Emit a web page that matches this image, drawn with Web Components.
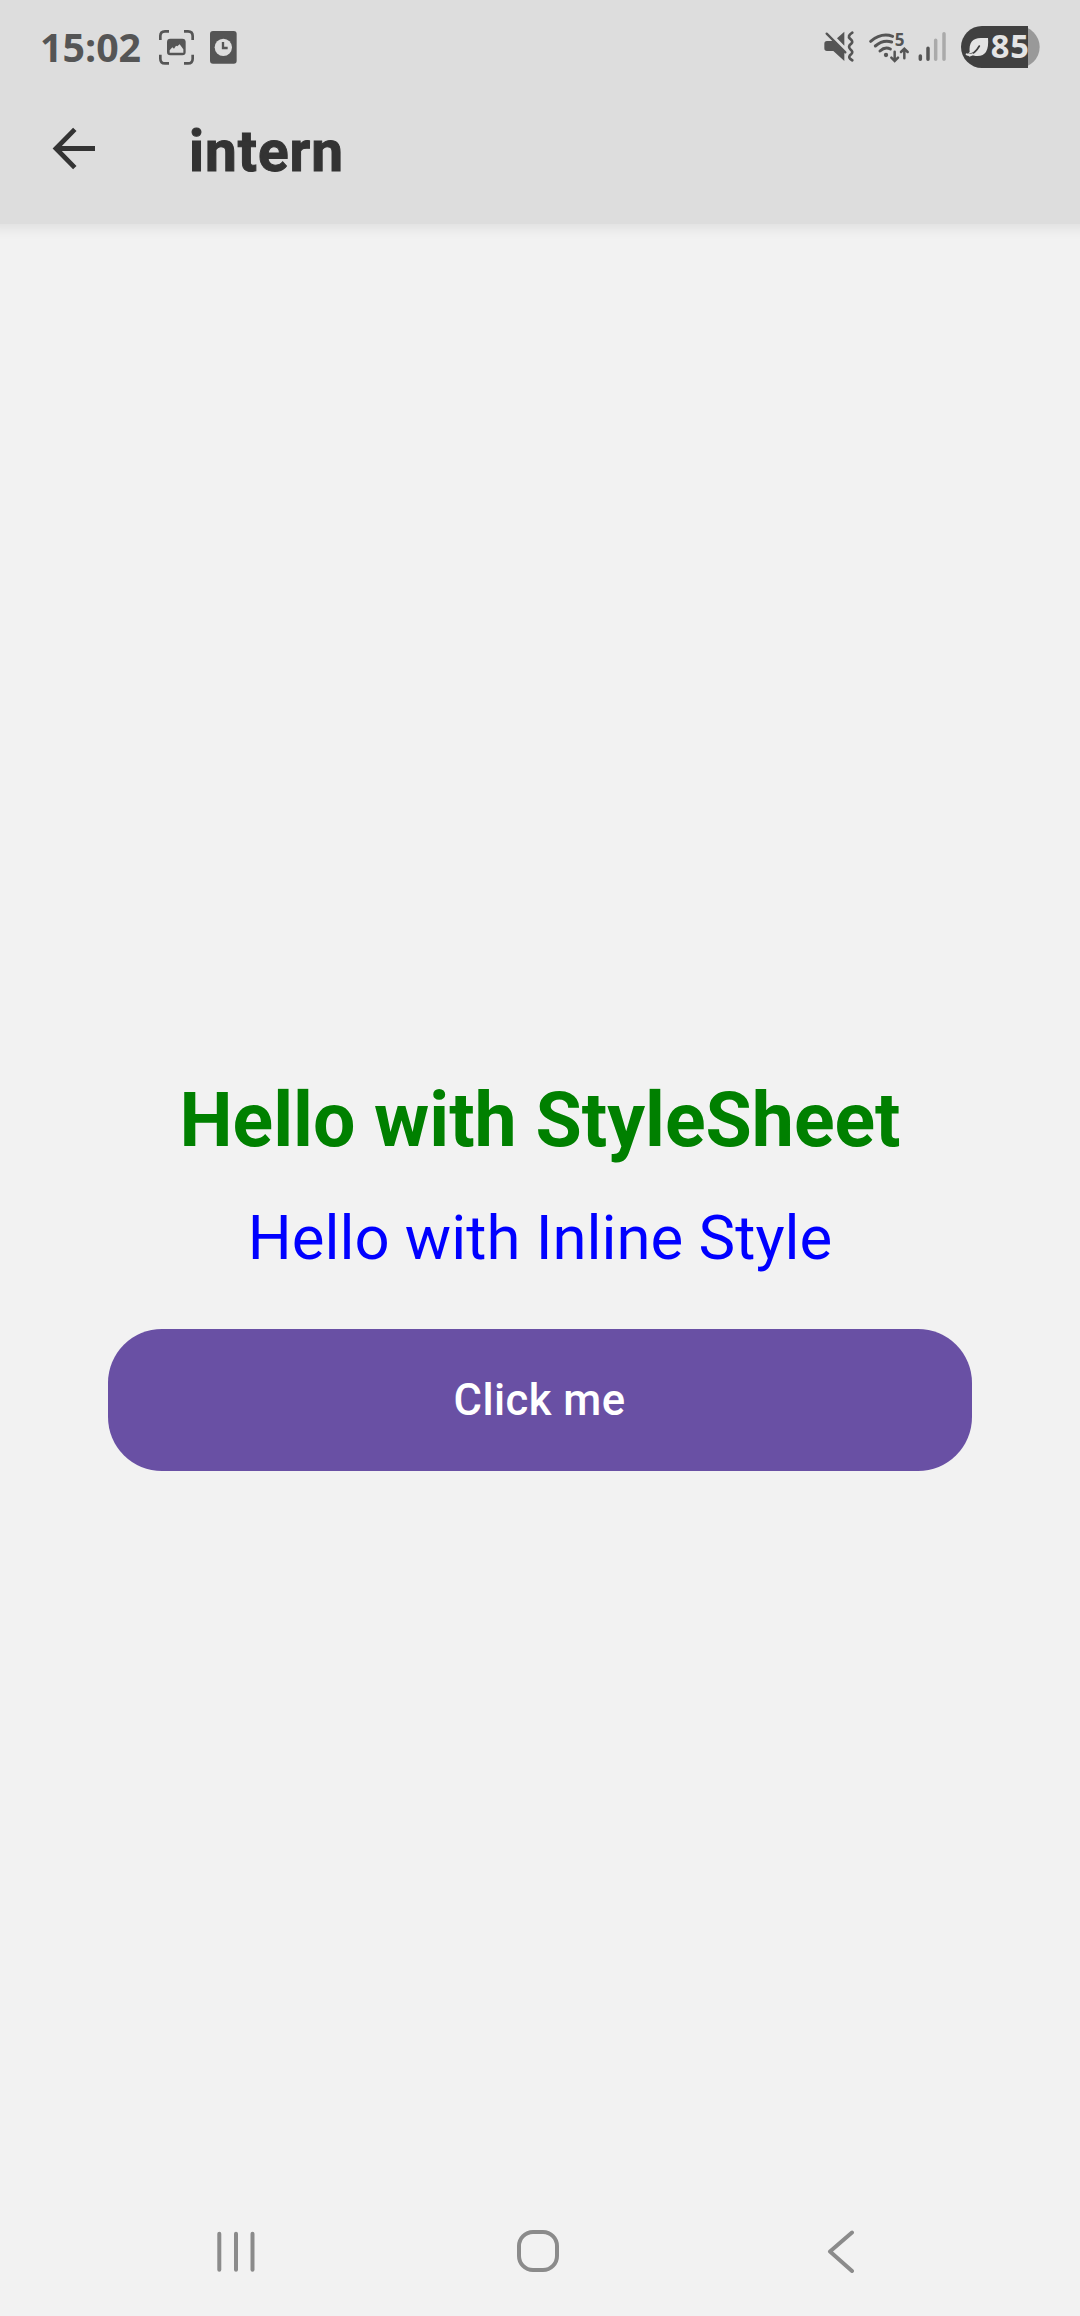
<!DOCTYPE html>
<html lang="en">
<head>
<meta charset="utf-8">
<title>intern</title>
<style>
html,body{margin:0;height:100%;background:#f2f2f2}
</style>
</head>
<body>
<app-screen>
  <status-bar slot="top" time="15:02" battery="85"></status-bar>
  <app-header slot="top">intern</app-header>
  <hello-text style="--size:75.2px;--weight:700;--color:#008000;--line:88px">Hello with StyleSheet</hello-text>
  <hello-text style="--size:61.7px;--weight:400;--color:#0000ff;--line:74px;--gap:37px">Hello with Inline Style</hello-text>
  <app-button>Click me</app-button>
  <nav-bar slot="bottom"></nav-bar>
</app-screen>
<script>
function define(name, html) {
  const template = document.createElement('template');
  template.innerHTML = html;
  customElements.define(name, class extends HTMLElement {
    constructor() {
      super();
      this.attachShadow({mode: 'open'}).append(template.content.cloneNode(true));
    }
    connectedCallback() {
      for (const el of this.shadowRoot.querySelectorAll('[data-attr]'))
        el.textContent = this.getAttribute(el.dataset.attr);
    }
  });
}

define('app-screen', `
<style>
:host{display:flex;flex-direction:column;height:2316px;width:1080px;background:#f2f2f2;font-family:Roboto,sans-serif;overflow:hidden}
.top{height:224px;background:#ddd;box-shadow:0 -6px 12px 11px rgba(0,0,0,.075);display:flex;flex-direction:column;flex:none}
main{flex:1;display:flex;flex-direction:column;align-items:center;padding-top:852px}
</style>
<div class="top"><slot name="top"></slot></div>
<main><slot></slot></main>
<slot name="bottom"></slot>`);

define('status-bar', `
<style>
:host{display:flex;height:94px;flex:none;align-items:flex-start;box-sizing:border-box;padding:26px 40px 0;font-family:"Open Sans",sans-serif;font-weight:700;color:#555}
svg{display:block;flex:none;overflow:visible}
.time{font-size:39.3px;line-height:42px;width:119px;white-space:nowrap}
.clock{margin-left:16px}
.mute{margin-left:auto}
.wifi{margin-left:13px}
.signal{margin-left:8px}
.battery{margin-left:15px}
</style>
<div class="time"><span data-attr="time"></span></div>
<svg width="35" height="42" viewBox="417 48 105 126" fill="none" stroke="#555" stroke-width="8">
  <path d="M447 64h-12q-14 0-14 14v12M492 64h12q14 0 14 14v12M421 134v12q0 14 14 14h12M518 134v12q0 14-14 14h-12"/>
  <rect x="441" y="86" width="56" height="50" rx="10" fill="#555" stroke="none"/>
  <path d="M449 128v-7l8-9 5 4 6-9 4 2 7-6 11 15v10z" fill="#ddd" stroke="none"/>
</svg>
<svg class="clock" width="27" height="42" viewBox="570 48 81 126">
  <rect x="570" y="63" width="80" height="98" rx="9" fill="#555"/>
  <circle cx="610" cy="112" r="26" fill="#ddd"/>
  <path d="M609 96v18h14" fill="none" stroke="#555" stroke-width="7"/>
</svg>
<svg class="mute" width="31" height="42" viewBox="71 48 93 126">
  <path d="M72 101q0-8 8-8h18L132 126v27l-33-30H80q-8 0-8-8zM110 85l22-20v42z" fill="#555"/>
  <path d="M79 71l56 56" stroke="#555" stroke-width="7" stroke-linecap="round"/>
  <path d="M156 68q-16 10-7 18 11 8 4 15-12 9-3 17 10 8 3 14-10 8-4 14l7 5" fill="none" stroke="#555" stroke-width="8" stroke-linecap="round"/>
</svg>
<svg class="wifi" width="42" height="42" viewBox="203 48 126 126">
  <g fill="none" stroke="#555" stroke-width="9" stroke-linecap="round">
    <path d="M211 94Q243 67 277 79M225 108Q248 88 274 96M239 123Q254 109 270 117"/>
    <path d="M283 125v27M273 143l10 10 10-10M312 145v-28M302 126l10-10 10 10" stroke-width="7.5"/>
  </g>
  <circle cx="257" cy="135" r="6.5" fill="#555"/>
  <text x="283" y="108" font-size="51" font-family="Open Sans" font-weight="700" fill="#555">5</text>
</svg>
<svg class="signal" width="28" height="42" viewBox="354 48 84 126" stroke-width="10.5" stroke-linecap="round">
  <path d="M361 138v10M384 115v33" stroke="#555"/>
  <path d="M407 91v57M432 71v77" stroke="#aaa"/>
</svg>
<svg class="battery" width="79" height="42" viewBox="483 48 237 126">
  <path d="M656 48a63 63 0 0 1 63 63 63 63 0 0 1-63 63z" fill="#999"/>
  <path d="M546 48H684V174H546a63 63 0 0 1 0-126z" fill="#404040"/>
  <path d="M509 126Q505 83 544 84h20q5 58-37 54l-10-2-8 4-8-6z" fill="#e4e4e4"/>
  <path d="M500 133q22 4 38-25" fill="none" stroke="#404040" stroke-width="5" stroke-linecap="round"/>
  <path d="M500 133q9 3 17 0" fill="none" stroke="#e4e4e4" stroke-width="6" stroke-linecap="round"/>
  <text data-attr="battery" x="572" y="144" font-size="98" letter-spacing="3" font-family="Open Sans" font-weight="700" fill="#e4e4e4"></text>
</svg>`);

define('app-header', `
<style>
:host{display:flex;flex:1;align-items:flex-start;padding-left:52px}
svg{display:block;margin-top:33px}
h1{margin:25px 0 0 94px;font-size:56.7px;line-height:66px;font-weight:700;color:#333;-webkit-text-stroke:1px #333;letter-spacing:1px}
</style>
<svg width="43" height="43" viewBox="0 0 43 43" fill="none" stroke="#333" stroke-width="4.8">
  <path d="M22.8 2.4L4 21.5 22.8 40.6M4 21.5H43"/>
</svg>
<h1><slot></slot></h1>`);

define('hello-text', `
<style>
:host{display:block;margin-top:var(--gap,0);font-size:var(--size);font-weight:var(--weight);line-height:var(--line);color:var(--color);white-space:nowrap}
</style><slot></slot>`);

define('app-button', `
<style>
:host{display:block;width:864px;margin-top:54px}
button{display:flex;align-items:center;justify-content:center;width:100%;height:142px;padding:2px 1px 0 0;border:0;border-radius:54px;background:#6950a4;color:#fff;font:500 43.6px/52px Roboto,sans-serif;letter-spacing:.45px}
</style><button><slot></slot></button>`);

define('nav-bar', `
<style>
:host{display:flex;flex:none;height:130px;align-items:center;padding-left:216px;box-sizing:border-box}
svg{display:block}
.home{margin-left:260px}
.back{margin-left:267px}
</style>
<svg width="40" height="44" viewBox="0 0 40 44" stroke="#8b8b8b" stroke-width="4" stroke-linecap="round"><path d="M3.3 4.8v36M20 4.8v36M36.5 4.8v36"/></svg>
<svg class="home" width="44" height="44" viewBox="0 0 44 44"><rect x="3" y="3" width="38" height="38" rx="14" fill="none" stroke="#8b8b8b" stroke-width="4"/></svg>
<svg class="back" width="30" height="44" viewBox="0 0 30 44" fill="none" stroke="#8b8b8b" stroke-width="4" stroke-linecap="round" stroke-linejoin="round"><path d="M25 3.5L3 22.5 25 42"/></svg>`);
</script>
</body>
</html>
